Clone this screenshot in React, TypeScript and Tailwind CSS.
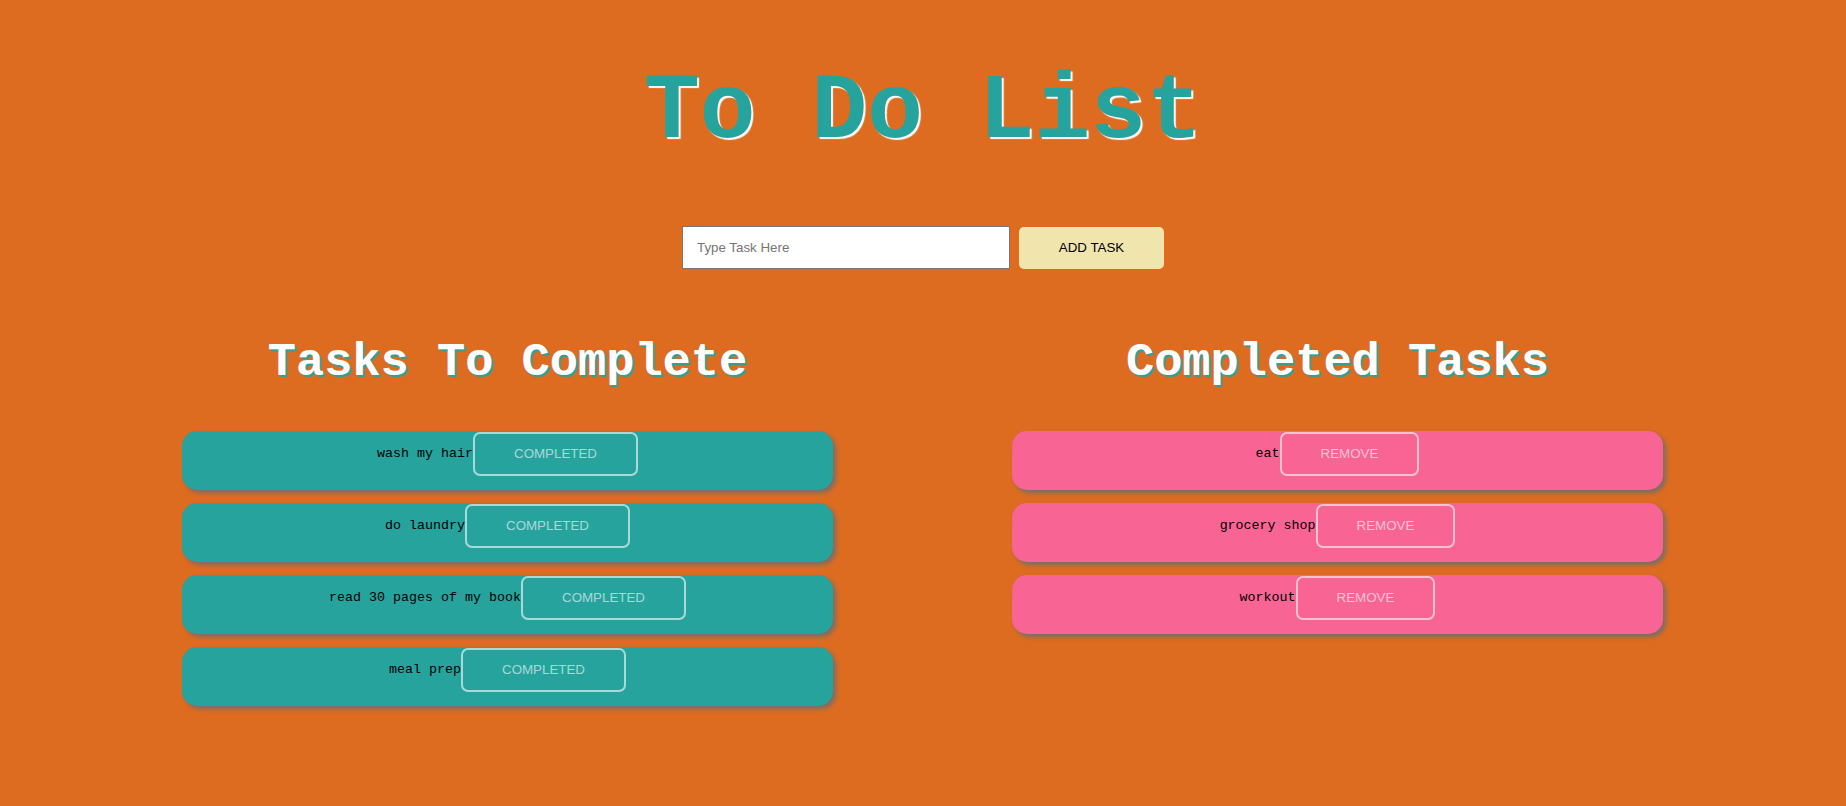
import React from "react";

const todo = ["wash my hair", "do laundry", "read 30 pages of my book", "meal prep"];
const done = ["eat", "grocery shop", "workout"];

function Row({ text, label, color }: { text: string; label: string; color: "teal" | "pink" }) {
  return (
    <div
      className={
        "flex h-[59px] items-start justify-center rounded-[15px] pt-px shadow-[3px_3px_4px_rgba(110,110,110,0.9)] " +
        (color === "teal" ? "bg-[#26a39d]" : "bg-[#f86595]")
      }
    >
      <div className="flex items-center">
        <span className="font-['Liberation_Mono',monospace] text-[13.33px] text-black">{text}</span>
        <button className="h-[44px] rounded-[7px] border-2 border-white/60 bg-transparent px-[39px] font-['Liberation_Sans',Arial,sans-serif] text-[13.33px] text-white/60">
          {label}
        </button>
      </div>
    </div>
  );
}

export default function App() {
  return (
    <div className="min-h-[806px] w-full bg-[#dd6c20] pt-[66px]">
      <h1 className="text-center font-['Liberation_Mono',monospace] text-[93px] font-bold leading-none text-[#26a39d] [text-shadow:2px_2px_1px_#ffffff]">
        To Do List
      </h1>
      <div className="mt-[67px] flex items-center justify-center gap-[9px]">
        <input
          type="text"
          placeholder="Type Task Here"
          className="h-[43px] w-[328px] border border-[#767676] bg-white px-[14px] font-['Liberation_Sans',Arial,sans-serif] text-[13.33px] text-black outline-none placeholder:text-[#757575]"
        />
        <button className="h-[42px] w-[145px] rounded-[5px] bg-[#f1e5ae] font-['Liberation_Sans',Arial,sans-serif] text-[13.33px] text-black">
          ADD TASK
        </button>
      </div>
      <div className="mt-[70px] flex gap-[179px] pl-[182px]">
        <div className="w-[651px]">
          <h2 className="text-center font-['Liberation_Mono',monospace] text-[47px] font-bold leading-none text-white [text-shadow:2px_2px_1px_#26a39d]">
            Tasks To Complete
          </h2>
          <div className="mt-[45px] flex flex-col gap-[13px]">
            {todo.map((t) => (
              <Row key={t} text={t} label="COMPLETED" color="teal" />
            ))}
          </div>
        </div>
        <div className="w-[651px]">
          <h2 className="text-center font-['Liberation_Mono',monospace] text-[47px] font-bold leading-none text-white [text-shadow:2px_2px_1px_#26a39d]">
            Completed Tasks
          </h2>
          <div className="mt-[45px] flex flex-col gap-[13px]">
            {done.map((t) => (
              <Row key={t} text={t} label="REMOVE" color="pink" />
            ))}
          </div>
        </div>
      </div>
    </div>
  );
}
